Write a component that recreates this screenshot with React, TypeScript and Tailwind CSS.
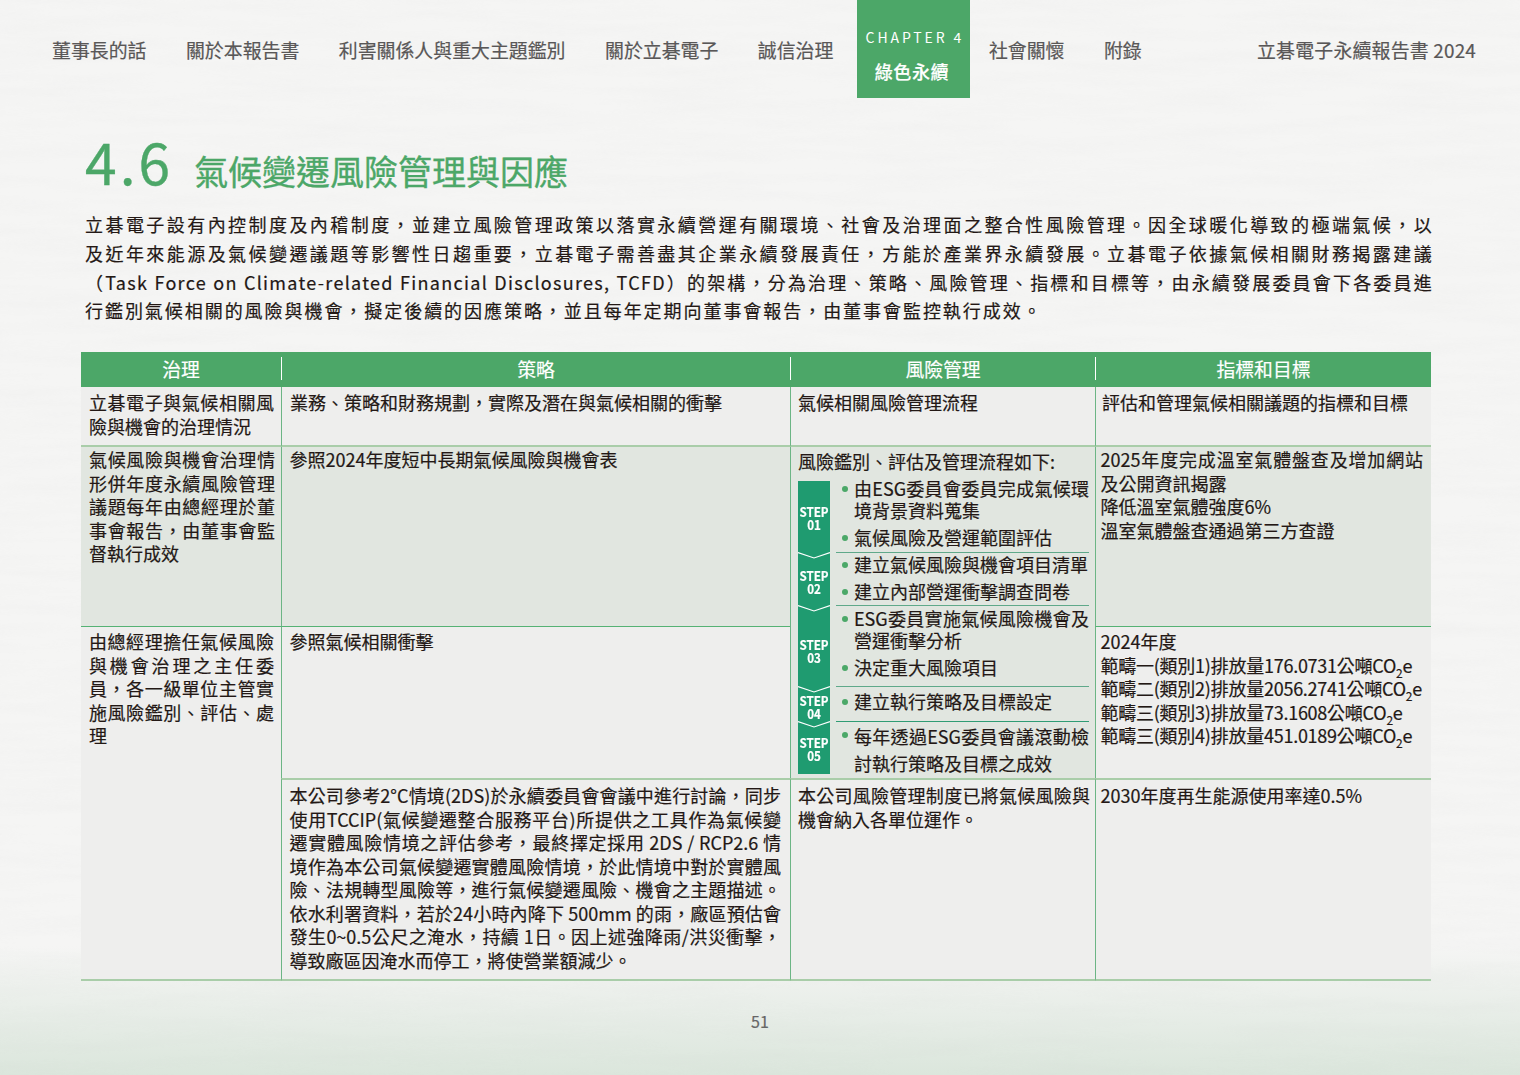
const navLeft = ["董事長的話", "關於本報告書", "利害關係人與重大主題鑑別", "關於立碁電子", "誠信治理"];
const navRight = ["社會關懷", "附錄"];

const intro = [
  "立碁電子設有內控制度及內稽制度，並建立風險管理政策以落實永續營運有關環境、社會及治理面之整合性風險管理。因全球暖化導致的極端氣候，以",
  "及近年來能源及氣候變遷議題等影響性日趨重要，立碁電子需善盡其企業永續發展責任，方能於產業界永續發展。立碁電子依據氣候相關財務揭露建議",
  "（Task Force on Climate-related Financial Disclosures, TCFD）的架構，分為治理、策略、風險管理、指標和目標等，由永續發展委員會下各委員進",
  "行鑑別氣候相關的風險與機會，擬定後續的因應策略，並且每年定期向董事會報告，由董事會監控執行成效。",
];

const strategyText = [
  "本公司參考2°C情境(2DS)於永續委員會會議中進行討論，同步",
  "使用TCCIP(氣候變遷整合服務平台)所提供之工具作為氣候變",
  "遷實體風險情境之評估參考，最終擇定採用 2DS / RCP2.6 情",
  "境作為本公司氣候變遷實體風險情境，於此情境中對於實體風",
  "險、法規轉型風險等，進行氣候變遷風險、機會之主題描述。",
  "依水利署資料，若於24小時內降下 500mm 的雨，廠區預估會",
  "發生0~0.5公尺之淹水，持續 1日。因上述強降雨/洪災衝擊，",
];

const steps = [
  { no: "01", rowClass: "h-[76px] -mt-[4px]", labelClass: "h-[72px] pt-[24px]", line: "border-[#5fa98a]", items: [["由ESG委員會委員完成氣候環", "境背景資料蒐集"], ["氣候風險及營運範圍評估"]], gap: "gap-[5px]", leading: "leading-[22px]" },
  { no: "02", rowClass: "h-[53px]", labelClass: "h-[53px] pt-[16px]", line: "border-[#5fa98a]", items: [["建立氣候風險與機會項目清單"], ["建立內部營運衝擊調查問卷"]], gap: "gap-[5px]", leading: "leading-[22px]" },
  { no: "03", rowClass: "h-[81px] pt-px", labelClass: "h-[81px] pt-[32px]", line: "border-[#5fa98a]", items: [["ESG委員實施氣候風險機會及", "營運衝擊分析"], ["決定重大風險項目"]], gap: "gap-[5px]", leading: "leading-[22px]" },
  { no: "04", rowClass: "h-[35px] pt-[3px]", labelClass: "h-[35px] pt-[7px]", line: "border-[#2f9c74]", items: [["建立執行策略及目標設定"]], gap: "gap-0", leading: "leading-[22px]" },
  { no: "05", rowClass: "h-[52px] pt-[.5px]", labelClass: "h-[52px] pt-[14px]", line: "border-transparent", items: [["每年透過ESG委員會議滾動檢", "討執行策略及目標之成效"]], gap: "gap-0", leading: "leading-[27px]" },
];

const scopes = [
  "範疇一(類別1)排放量176.0731公噸CO",
  "範疇二(類別2)排放量2056.2741公噸CO",
  "範疇三(類別3)排放量73.1608公噸CO",
  "範疇三(類別4)排放量451.0189公噸CO",
];

function Line({ children }: { children: React.ReactNode }) {
  return <div className="text-justify [text-align-last:justify]">{children}</div>;
}

function Chevron() {
  return (
    <svg className="absolute left-0 -bottom-[6px] z-10" width="32" height="7" viewBox="0 0 32 7" fill="none">
      <path d="M0 .6 16 6 32 .6" stroke="#fff" strokeWidth="1.1" />
    </svg>
  );
}

function PaperTexture() {
  return (
    <svg className="absolute inset-0 w-full h-full pointer-events-none" aria-hidden="true">
      <filter id="paper">
        <feTurbulence type="fractalNoise" baseFrequency="0.008 0.08" numOctaves="4" seed="7" />
        <feColorMatrix values="0 0 0 0 .55  0 0 0 0 .55  0 0 0 0 .55  .55 0 0 0 -.2" />
      </filter>
      <rect width="100%" height="100%" filter="url(#paper)" opacity="0.2" />
    </svg>
  );
}

function StepFlow() {
  return (
    <div className="flex flex-col mt-[7px]">
      {steps.map((s, i) => (
        <div key={s.no} className="flex">
          <div className={`relative w-[32px] shrink-0 bg-[#1f9b70] text-white text-center font-bold text-[13.5px] leading-[13px] ${s.labelClass}`}>
            <div className="scale-x-[.86] -mx-[2px]">STEP {s.no}</div>
            {i < steps.length - 1 && <Chevron />}
          </div>
          <div className={`ml-[6px] w-[253px] border-b ${s.line} ${s.rowClass} ${s.leading} flex flex-col ${s.gap}`}>
            {s.items.map((lines) => (
              <div key={lines[0]} className="flex">
                <span className="w-[6px] h-[6px] rounded-full bg-[#4ba868] ml-[6px] mt-[9px] shrink-0" />
                <div className="ml-[6px] w-[235px]">
                  {lines.map((l, j) =>
                    j === 0 && lines.length > 1 ? <Line key={l}>{l}</Line> : <div key={l}>{l}</div>
                  )}
                </div>
              </div>
            ))}
          </div>
        </div>
      ))}
    </div>
  );
}

export default function App() {
  return (
    <div className="relative w-[1520px] h-[1075px] overflow-hidden bg-gradient-to-b from-[#f5f5f4] from-[88%] to-[#dbe6dc] font-['Noto_Sans_CJK_TC','Noto_Sans',sans-serif] text-[#231815] [-webkit-text-stroke-width:.2px]">
      <PaperTexture />
      <div className="relative">
        <header className="h-[98px] flex pl-[52px] pr-[44px] text-[18.9px] text-[#595757]">
          <nav className="flex items-center gap-[39.5px] pt-[3px]">
            {navLeft.map((n) => (
              <span key={n}>{n}</span>
            ))}
          </nav>
          <div className="ml-[23.5px] w-[113px] bg-[#4ca768] text-white flex flex-col items-center">
            <div className="mt-[27px] ml-[3px] text-[14px] leading-[20px] tracking-[2.9px] whitespace-nowrap [-webkit-text-stroke-width:0]">CHAPTER 4</div>
            <div className="mt-[11px] -ml-[3px] text-[18px] leading-[26px] tracking-[.6px] font-medium">綠色永續</div>
          </div>
          <nav className="ml-[19px] flex items-center gap-[39.5px] pt-[3px]">
            {navRight.map((n) => (
              <span key={n}>{n}</span>
            ))}
          </nav>
          <div className="ml-auto flex items-center pt-[3px] tracking-[.2px]">立碁電子永續報告書 2024</div>
        </header>

        <section className="pl-[85px] w-[1433px]">
          <h1 className="mt-[27px] flex items-baseline text-[#4ca768] [-webkit-text-stroke-width:.35px]">
            <span className="text-[57px] leading-[70px] tracking-[3px]">4.6</span>
            <span className="ml-[21px] text-[34px] leading-[44px]">氣候變遷風險管理與因應</span>
          </h1>
          <div className="mt-[15px] text-[18px] leading-[28.8px] tracking-[1.3px]">
            {intro.map((l, i) =>
              i < 3 ? <Line key={l}>{l}</Line> : <div key={l} className="tracking-[1.95px]">{l}</div>
            )}
          </div>
        </section>

        <div className="ml-[81px] mt-[27px] w-[1350px] grid grid-cols-[200px_509px_305px_336px] text-[18px] leading-[23.5px]">
          <div className="col-span-4 h-[35px] pb-[2px] grid grid-cols-[200px_509px_305px_336px] bg-[#4ca768] text-white text-[18.8px] items-center text-center">
            <div className="leading-[23px]">治理</div>
            <div className="leading-[23px] border-l border-white">策略</div>
            <div className="leading-[23px] border-l border-white">風險管理</div>
            <div className="leading-[23px] border-l border-white">指標和目標</div>
          </div>

          <div className="h-[60px] bg-[#eeeeed] border-b-2 border-[#a9cda9] pl-[8px] pr-[7px] pt-[4px]">
            <Line>立碁電子與氣候相關風</Line>
            <div>險與機會的治理情況</div>
          </div>
          <div className="h-[60px] bg-[#eeeeed] border-b-2 border-l border-[#a9cda9] border-l-[#6cb585] pl-[8px] pt-[4px]">業務、策略和財務規劃，實際及潛在與氣候相關的衝擊</div>
          <div className="h-[60px] bg-[#eeeeed] border-b-2 border-l border-[#a9cda9] border-l-[#6cb585] pl-[7px] pt-[4px]">氣候相關風險管理流程</div>
          <div className="h-[60px] bg-[#eeeeed] border-b-2 border-l border-[#a9cda9] border-l-[#6cb585] pl-[6px] pt-[4px]">評估和管理氣候相關議題的指標和目標</div>

          <div className="h-[180px] bg-[#e1e6e0] border-b border-[#55b274] pl-[8px] pr-[6px] pt-px">
            <Line>氣候風險與機會治理情</Line>
            <Line>形併年度永續風險管理</Line>
            <Line>議題每年由總經理於董</Line>
            <Line>事會報告，由董事會監</Line>
            <div>督執行成效</div>
          </div>
          <div className="h-[180px] bg-[#e1e6e0] border-b border-l border-[#55b274] border-l-[#6cb585] pl-[7.5px] pt-px">參照2024年度短中長期氣候風險與機會表</div>
          <div className="row-span-2 h-[331px] bg-[#e1e6e0] border-l border-[#6cb585] pl-[7px] pt-[3px]">
            <div className="h-[24px]">風險鑑別、評估及管理流程如下:</div>
            <StepFlow />
          </div>
          <div className="h-[180px] bg-[#e1e6e0] border-b border-l border-[#55b274] border-l-[#6cb585] pl-[4.5px] pr-[8px] pt-px">
            <Line>2025年度完成溫室氣體盤查及增加網站</Line>
            <div>及公開資訊揭露</div>
            <div>降低溫室氣體強度6%</div>
            <div>溫室氣體盤查通過第三方查證</div>
          </div>

          <div className="row-span-2 h-[354px] bg-[#eeeeed] border-b-2 border-[#a9cda9] pl-[8px] pr-[7px] pt-[3px]">
            <Line>由總經理擔任氣候風險</Line>
            <Line>與機會治理之主任委</Line>
            <Line>員，各一級單位主管實</Line>
            <Line>施風險鑑別、評估、處</Line>
            <div>理</div>
          </div>
          <div className="h-[151px] bg-[#eeeeed] border-l border-[#6cb585] pl-[7.5px] pt-[3px]">參照氣候相關衝擊</div>
          <div className="h-[151px] bg-[#eeeeed] border-l border-[#6cb585] pl-[4.5px] pt-[3px]">
            <div>2024年度</div>
            {scopes.map((s) => (
              <div key={s} className="tracking-[-.25px]">
                {s}
                <sub className="text-[12px] -bottom-[5px]">2</sub>e
              </div>
            ))}
          </div>

          <div className="h-[203px] bg-[#eeeeed] border-y-2 border-l border-[#a9cda9] border-l-[#6cb585] pl-[7.5px] pr-[9px] pt-[4px]">
            {strategyText.map((l) => (
              <Line key={l}>{l}</Line>
            ))}
            <div>導致廠區因淹水而停工，將使營業額減少。</div>
          </div>
          <div className="h-[203px] bg-[#eeeeed] border-y-2 border-l border-[#a9cda9] border-l-[#6cb585] pl-[7px] pr-[5px] pt-[4px]">
            <Line>本公司風險管理制度已將氣候風險與</Line>
            <div>機會納入各單位運作。</div>
          </div>
          <div className="h-[203px] bg-[#eeeeed] border-y-2 border-l border-[#a9cda9] border-l-[#6cb585] pl-[4.5px] pt-[4px]">2030年度再生能源使用率達0.5%</div>
        </div>

        <div className="mt-[29px] text-center text-[16px] leading-[22px] text-[#666]">51</div>
      </div>
    </div>
  );
}
